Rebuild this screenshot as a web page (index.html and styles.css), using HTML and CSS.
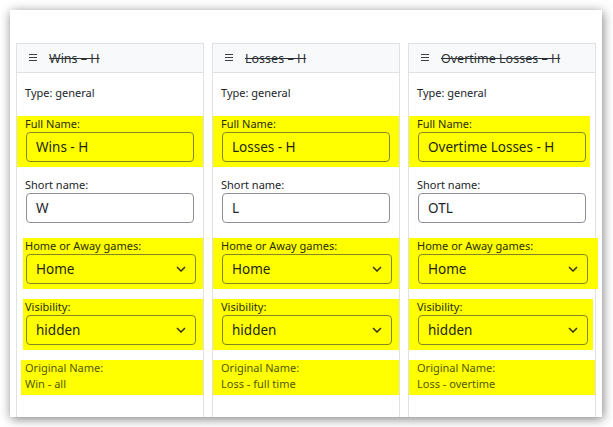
FILE: index.html
```html
<!DOCTYPE html>
<html lang="en">
<head>
    <meta charset="UTF-8">
    <meta name="viewport" content="width=device-width, initial-scale=1.0">
    <title>Column mapping</title>
    <link rel="stylesheet" href="styles.css">
</head>
<body>
    <div class="frame">
        <!-- Wins -->
        <div class="column">
            <div class="column-header">
                <svg class="drag-icon" width="8" height="8" viewBox="0 0 8 8"><path d="M0 1.5h8M0 4.5h8M0 7.5h8" stroke="#3c4248" stroke-width="1"/></svg>
                <span class="column-title">Wins &ndash; H</span>
            </div>
            <div class="column-body">
                <div class="type-line">Type: general</div>
                <div class="field hl">
                    <label>Full Name:</label>
                    <input class="text-input" type="text" value="Wins - H">
                </div>
                <div class="field">
                    <label>Short name:</label>
                    <input class="text-input" type="text" value="W">
                </div>
                <div class="field hl hl-inset">
                    <label>Home or Away games:</label>
                    <div class="select"><span>Home</span><svg width="10" height="6" viewBox="0 0 10 6"><path d="M1 1l4 4 4-4" fill="none" stroke="#33331a" stroke-width="1.5"/></svg></div>
                </div>
                <div class="field hl hl-inset">
                    <label>Visibility:</label>
                    <div class="select"><span>hidden</span><svg width="10" height="6" viewBox="0 0 10 6"><path d="M1 1l4 4 4-4" fill="none" stroke="#33331a" stroke-width="1.5"/></svg></div>
                </div>
                <div class="field hl hl-inset-small orig">
                    <label>Original Name:</label>
                    <div class="orig-value">Win - all</div>
                </div>
            </div>
        </div>

        <!-- Losses -->
        <div class="column">
            <div class="column-header">
                <svg class="drag-icon" width="8" height="8" viewBox="0 0 8 8"><path d="M0 1.5h8M0 4.5h8M0 7.5h8" stroke="#3c4248" stroke-width="1"/></svg>
                <span class="column-title">Losses &ndash; H</span>
            </div>
            <div class="column-body">
                <div class="type-line">Type: general</div>
                <div class="field hl">
                    <label>Full Name:</label>
                    <input class="text-input" type="text" value="Losses - H">
                </div>
                <div class="field">
                    <label>Short name:</label>
                    <input class="text-input" type="text" value="L">
                </div>
                <div class="field hl">
                    <label>Home or Away games:</label>
                    <div class="select"><span>Home</span><svg width="10" height="6" viewBox="0 0 10 6"><path d="M1 1l4 4 4-4" fill="none" stroke="#33331a" stroke-width="1.5"/></svg></div>
                </div>
                <div class="field hl">
                    <label>Visibility:</label>
                    <div class="select"><span>hidden</span><svg width="10" height="6" viewBox="0 0 10 6"><path d="M1 1l4 4 4-4" fill="none" stroke="#33331a" stroke-width="1.5"/></svg></div>
                </div>
                <div class="field hl orig">
                    <label>Original Name:</label>
                    <div class="orig-value">Loss - full time</div>
                </div>
            </div>
        </div>

        <!-- Overtime losses -->
        <div class="column">
            <div class="column-header">
                <svg class="drag-icon" width="8" height="8" viewBox="0 0 8 8"><path d="M0 1.5h8M0 4.5h8M0 7.5h8" stroke="#3c4248" stroke-width="1"/></svg>
                <span class="column-title">Overtime Losses &ndash; H</span>
            </div>
            <div class="column-body">
                <div class="type-line">Type: general</div>
                <div class="field hl hl-short">
                    <label>Full Name:</label>
                    <input class="text-input" type="text" value="Overtime Losses - H">
                </div>
                <div class="field">
                    <label>Short name:</label>
                    <input class="text-input" type="text" value="OTL">
                </div>
                <div class="field hl hl-over">
                    <label>Home or Away games:</label>
                    <div class="select"><span>Home</span><svg width="10" height="6" viewBox="0 0 10 6"><path d="M1 1l4 4 4-4" fill="none" stroke="#33331a" stroke-width="1.5"/></svg></div>
                </div>
                <div class="field hl hl-short-small">
                    <label>Visibility:</label>
                    <div class="select"><span>hidden</span><svg width="10" height="6" viewBox="0 0 10 6"><path d="M1 1l4 4 4-4" fill="none" stroke="#33331a" stroke-width="1.5"/></svg></div>
                </div>
                <div class="field hl orig">
                    <label>Original Name:</label>
                    <div class="orig-value">Loss - overtime</div>
                </div>
            </div>
        </div>
    </div>
</body>
</html>
```

FILE: styles.css
```css
body {
    margin: 0;
    background-color: #ffffff;
    font-family: "Noto Sans", "Open Sans", sans-serif;
    color: #212529;
}
.frame {
    margin: 10px;
    width: 592px;
    height: 407px;
    box-sizing: border-box;
    padding: 33px 6px 0;
    display: flex;
    gap: 8px;
    background-color: #ffffff;
    box-shadow: 1px 2px 10px rgba(0, 0, 0, 0.5);
    overflow: hidden;
}
.column {
    width: 188px;
    flex: none;
    box-sizing: border-box;
    border: 1px solid #dee2e6;
    border-bottom: none;
}
.column-header {
    height: 29px;
    box-sizing: border-box;
    background-color: #f8f9fa;
    border-bottom: 1px solid #dee2e6;
    display: flex;
    align-items: center;
    gap: 12px;
    padding-left: 12px;
}
.drag-icon {
    margin-bottom: 3px;
}
.column-title {
    font-size: 12.5px;
    color: #2b3035;
    text-decoration: line-through;
}
.column-body {
    display: flex;
    flex-direction: column;
    gap: 10px;
    padding-top: 12px;
}
.type-line {
    font-size: 11px;
    line-height: 16px;
    padding-left: 8px;
    margin-bottom: 5px;
}
.field {
    display: flex;
    flex-direction: column;
    padding: 0 7px 5px 8px;
}
.field label {
    font-size: 11px;
    line-height: 16px;
}
.text-input {
    width: 168px;
    height: 30px;
    box-sizing: border-box;
    margin: 0 0 0 1px;
    padding: 0 9px;
    border: 1px solid #8c9197;
    border-radius: 4px;
    background: transparent;
    font-family: inherit;
    font-size: 13.5px;
    color: #212529;
}
.select {
    height: 30px;
    box-sizing: border-box;
    margin-left: 1px;
    padding: 0 9px;
    border: 1px solid #8c9197;
    border-radius: 4px;
    display: flex;
    align-items: center;
    justify-content: space-between;
    font-size: 13.5px;
}
.hl {
    background-color: #ffff00;
    color: #2a2d00;
}
.hl .text-input,
.hl .select {
    border-color: #85881a;
    color: #23260a;
}
.hl-inset {
    margin-left: 6px;
    padding-left: 2px;
}
.hl-inset-small {
    margin-left: 4px;
    padding-left: 4px;
}
.hl-short {
    margin-right: 5px;
    padding-right: 2px;
}
.hl-short-small {
    margin-right: 2px;
    padding-right: 5px;
}
.hl-over {
    margin-right: -3px;
    padding-right: 10px;
}
.orig {
    padding-bottom: 4px;
    color: #525800;
}
.orig-value {
    font-size: 11px;
    line-height: 15px;
}
```
